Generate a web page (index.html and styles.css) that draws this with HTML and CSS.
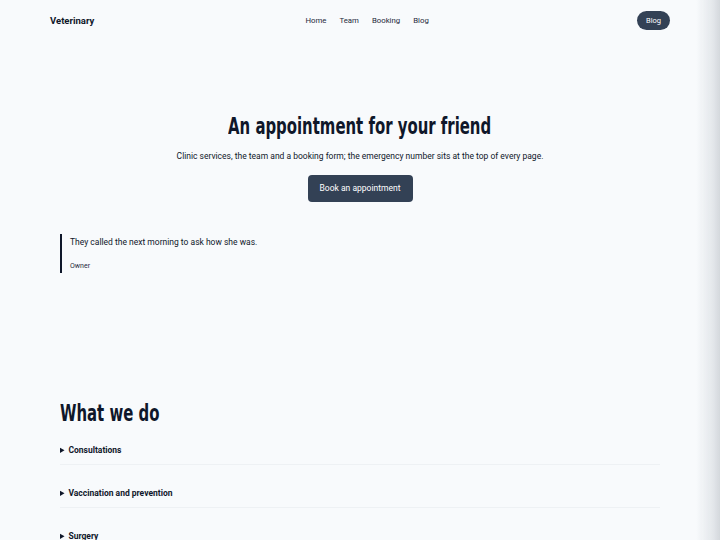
FILE: index.html
```html
<!DOCTYPE html>
<html lang="en">
<head>
<meta charset="utf-8">
<title>Veterinary</title>
<link rel="stylesheet" href="styles.css">
</head>
<body>
<header class="topbar">
  <a class="brand" href="#">Veterinary</a>
  <nav class="links">
    <a href="#">Home</a>
    <a href="#">Team</a>
    <a href="#">Booking</a>
    <a href="#">Blog</a>
  </nav>
  <a class="pill" href="#">Blog</a>
</header>
<main class="wrap">
  <section class="hero">
    <h1 class="display">An appointment for your friend</h1>
    <p class="lead">Clinic services, the team and a booking form; the emergency number sits at the top of every page.</p>
    <a class="cta" href="#">Book an appointment</a>
  </section>
  <blockquote class="quote">
    <p class="quote-text">They called the next morning to ask how she was.</p>
    <p class="quote-by">Owner</p>
  </blockquote>
  <section class="services">
    <h2 class="display section-title">What we do</h2>
    <details class="item"><summary>Consultations</summary></details>
    <details class="item"><summary>Vaccination and prevention</summary></details>
    <details class="item"><summary>Surgery</summary></details>
  </section>
</main>
<div class="edge"></div>
</body>
</html>
```
FILE: styles.css
```css
* { box-sizing: border-box; }
html, body { margin: 0; padding: 0; }
body {
  background: #f8fafc;
  color: #0f172a;
  font-family: Roboto, "Liberation Sans", sans-serif;
  font-size: 8.5px;
}
a { color: inherit; text-decoration: none; }
.topbar {
  display: flex;
  justify-content: space-between;
  align-items: flex-start;
  padding: 11px 50px 0 50px;
  height: 41px;
}
.brand {
  font-weight: 700;
  font-size: 9.5px;
  line-height: 19px;
}
.links {
  display: flex;
  gap: 13px;
  font-size: 7.8px;
  line-height: 19px;
  color: #1e293b;
  margin-left: 3px;
}
.pill {
  background: #334155;
  color: #fff;
  border-radius: 10px;
  height: 19px;
  line-height: 19px;
  padding: 0 9px;
  font-size: 7.5px;
}
.wrap {
  width: 600px;
  margin: 0 auto;
}
.display {
  display: inline-block;
  font-family: "DejaVu Sans Condensed", "Liberation Sans", sans-serif;
  font-weight: 700;
  font-size: 23.5px;
  line-height: 28px;
  margin: 0;
  transform: scaleX(0.705);
}
.hero {
  display: flex;
  flex-direction: column;
  align-items: center;
  padding-top: 71px;
}
.hero .display {
  transform-origin: center;
}
.lead {
  margin: 10px 0 0;
  font-size: 8.5px;
  line-height: 12px;
}
.cta {
  margin-top: 13px;
  background: #334155;
  color: #fff;
  border-radius: 4px;
  width: 105px;
  height: 27px;
  line-height: 27px;
  text-align: center;
  font-size: 8.5px;
}
.quote {
  margin: 32px 0 0;
  border-left: 2.5px solid #0f172a;
  padding: 2px 0 2px 8px;
}
.quote-text {
  margin: 0;
  font-size: 8.5px;
  line-height: 12px;
}
.quote-by {
  margin: 13px 0 0;
  font-size: 7px;
  line-height: 10px;
  color: #1e293b;
}
.services {
  padding-top: 126px;
}
.section-title {
  transform-origin: left center;
  margin-bottom: 16px;
}
.item {
  border-bottom: 1px solid #eef1f4;
  padding: 0 0 6px;
  margin-bottom: 21px;
}
.item summary {
  font-weight: 700;
  font-size: 8.5px;
  line-height: 14px;
  cursor: pointer;
}
.item summary::marker { font-size: 8px; }
.edge {
  position: fixed;
  top: 0;
  right: 0;
  bottom: 0;
  width: 24px;
  background: linear-gradient(to right, rgba(203,208,214,0), rgba(203,208,214,0.45) 70%, rgba(200,204,210,0.75));
  pointer-events: none;
}
```
